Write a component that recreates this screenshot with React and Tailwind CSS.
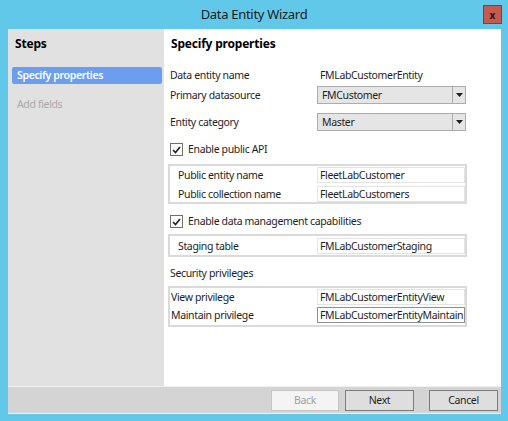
import React from 'react';

// Small building blocks for the wizard form
const Combo = ({ value }) => (
    <div className="flex h-[18px] w-[149px] border border-[#acacac] bg-[#e5e5e5]">
        <div className="flex flex-1 items-center pl-[4px] text-[#1e1e1e]">{value}</div>
        <div className="flex w-[13px] items-center justify-center border-l border-[#acacac]">
            <svg width="7" height="4" viewBox="0 0 7 4">
                <path d="M0 0H7L3.5 4Z" fill="#1e1e1e" />
            </svg>
        </div>
    </div>
);

const Input = ({ value, focused }) => (
    <div
        className={
            'flex h-[16px] w-[148px] items-center overflow-hidden whitespace-nowrap border bg-white pl-[2px] text-[#1e1e1e] ' +
            (focused ? 'border-[#8e8f8f]' : 'border-[#e3e3e3]')
        }
    >
        {value}
    </div>
);

const Check = ({ label, className }) => (
    <div className={'flex h-[13px] items-center gap-[5px] pl-[2px] ' + className}>
        <div className="flex h-[13px] w-[13px] items-center justify-center border border-[#707070] bg-white">
            <svg width="9" height="8" viewBox="0 0 9 8">
                <path d="M1 4L3.5 6.5L8 1" stroke="#1e1e1e" strokeWidth="1.6" fill="none" />
            </svg>
        </div>
        <span className="text-[#1e1e1e]">{label}</span>
    </div>
);

const App = () => {
    return (
        <div className="flex h-[421px] w-[508px] flex-col bg-[#62c8ea] font-['Noto_Sans',sans-serif] text-[10.5px] leading-none tracking-[-0.35px]">
            {/* title bar */}
            <div className="relative flex h-[29px] items-center justify-center">
                <span className="text-[13px] tracking-[-0.3px] text-[#1b1b1b]">Data Entity Wizard</span>
                <div className="absolute right-[6px] top-[5px] flex h-[19px] w-[19px] items-center justify-center border border-[#8b3a3a] bg-[#c75a50] text-[10px] font-bold tracking-normal text-[#1a1a1a]">
                    x
                </div>
            </div>

            <div className="ml-[8px] mr-[7px] flex flex-1 flex-col">
                <div className="flex h-[357px]">
                    {/* steps */}
                    <div className="flex w-[156px] flex-col bg-[#e1e1e1]">
                        <div className="flex h-[30px] items-center pl-[7px] text-[12px] font-bold tracking-[-0.2px] text-black">Steps</div>
                        <div className="ml-[4px] mt-[8px] flex h-[17px] w-[150px] items-center rounded-[2px] bg-[#6c9ef0] pl-[5px] font-semibold text-white">
                            Specify properties
                        </div>
                        <div className="mt-[12px] flex h-[17px] items-center pl-[9px] text-[#a8a8a8]">Add fields</div>
                    </div>

                    {/* properties */}
                    <div className="flex flex-1 flex-col bg-white pl-[4px]">
                        <div className="flex h-[30px] items-center pl-[3px] text-[12px] font-bold tracking-[-0.2px] text-black">Specify properties</div>

                        <div className="mt-[7px] flex h-[18px] items-center">
                            <span className="w-[148px] pl-[2px] text-[#1e1e1e]">Data entity name</span>
                            <span className="pl-[4px] text-[#1e1e1e]">FMLabCustomerEntity</span>
                        </div>
                        <div className="mt-[2px] flex h-[18px] items-center">
                            <span className="w-[149px] pl-[2px] text-[#1e1e1e]">Primary datasource</span>
                            <Combo value="FMCustomer" />
                        </div>
                        <div className="mt-[9px] flex h-[18px] items-center">
                            <span className="w-[149px] pl-[2px] text-[#1e1e1e]">Entity category</span>
                            <Combo value="Master" />
                        </div>

                        <Check label="Enable public API" className="mt-[12px]" />

                        <div className="mt-[8px] flex w-[299px] flex-col gap-[3px] border-2 border-[#dadada] pt-[1px]">
                            <div className="flex items-center">
                                <span className="w-[147px] pl-[8px] text-[#1e1e1e]">Public entity name</span>
                                <Input value="FleetLabCustomer" />
                            </div>
                            <div className="flex items-center">
                                <span className="w-[147px] pl-[8px] text-[#1e1e1e]">Public collection name</span>
                                <Input value="FleetLabCustomers" />
                            </div>
                        </div>

                        <Check label="Enable data management capabilities" className="mt-[11px]" />

                        <div className="mt-[6px] flex h-[23px] w-[299px] border-2 border-[#dadada] pt-[1px]">
                            <div className="flex items-center">
                                <span className="w-[147px] pl-[8px] text-[#1e1e1e]">Staging table</span>
                                <Input value="FMLabCustomerStaging" />
                            </div>
                        </div>

                        <div className="mt-[8px] flex h-[16px] items-center pl-[2px] text-[#1e1e1e]">Security privileges</div>

                        <div className="mt-[5px] flex h-[41px] w-[299px] flex-col gap-[2px] border-2 border-[#dadada] pt-[1px]">
                            <div className="flex items-center">
                                <span className="w-[147px] pl-[1px] text-[#1e1e1e]">View privilege</span>
                                <Input value="FMLabCustomerEntityView" />
                            </div>
                            <div className="flex items-center">
                                <span className="w-[147px] pl-[1px] text-[#1e1e1e]">Maintain privilege</span>
                                <Input value="FMLabCustomerEntityMaintain" focused />
                            </div>
                        </div>
                    </div>
                </div>

                {/* footer */}
                <div className="flex h-[28px] items-center justify-end border-b border-t border-[#f0f0f0] bg-[#d4d4d4] pr-[3px]">
                    <button className="h-[21px] w-[68px] border border-[#c4c4c4] bg-[#f4f4f4] text-[#a0a0a0]">Back</button>
                    <button className="ml-[6px] h-[21px] w-[69px] border border-[#7b7b7b] bg-[#dedede] text-[#1e1e1e]">Next</button>
                    <button className="ml-[15px] h-[21px] w-[69px] border border-[#7b7b7b] bg-[#dedede] text-[#1e1e1e]">Cancel</button>
                </div>
            </div>
            <div className="h-[7px]" />
        </div>
    );
};

export default App;
